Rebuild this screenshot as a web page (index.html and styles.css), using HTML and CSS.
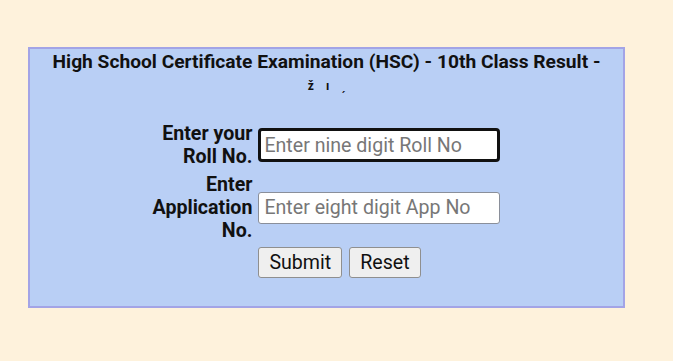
FILE: index.html
```html
<!DOCTYPE html>
<html>
<head>
<meta charset="utf-8">
<link rel="stylesheet" href="styles.css">
</head>
<body>
<div class="box">
  <div class="title">High School Certificate Examination (HSC) - 10th Class Result -</div>
  <div class="subtitle"><span class="g1">ž</span><span class="g2">ı</span><span class="g3">ˏ</span></div>
  <form class="form">
    <label class="label" for="roll">Enter your<br>Roll No.</label>
    <div class="cell"><input id="roll" class="field focused" type="text" placeholder="Enter nine digit Roll No"></div>
    <label class="label" for="app">Enter<br>Application<br>No.</label>
    <div class="cell"><input id="app" class="field" type="text" placeholder="Enter eight digit App No"></div>
    <div></div>
    <div class="buttons">
      <button type="button" class="btn">Submit</button>
      <button type="button" class="btn">Reset</button>
    </div>
  </form>
</div>
</body>
</html>
```
FILE: styles.css
```css
html, body {
  margin: 0;
  padding: 0;
  background: #fef2dc;
  font-family: Roboto, "Liberation Sans", sans-serif;
}
body {
  padding: 47px 48px 0 28px;
}
.box {
  width: 593px;
  height: 257px;
  background: #b9cff5;
  border: 2px solid #a3a4e6;
  box-sizing: content-box;
}
.title {
  text-align: center;
  font-weight: bold;
  font-size: 19.2px;
  color: #111;
  margin-top: 1px;
  line-height: 24px;
}
.subtitle {
  text-align: center;
  font-size: 12px;
  font-weight: bold;
  line-height: 24px;
  height: 24px;
  color: #111;
}
.g1, .g2, .g3 { display: inline-block; margin: 0 6px; }
.form {
  display: grid;
  grid-template-columns: auto auto;
  justify-content: center;
  align-items: center;
  column-gap: 6px;
  row-gap: 5px;
  margin-top: 24px;
}
.label {
  text-align: right;
  font-weight: bold;
  font-size: 19.6px;
  line-height: 23px;
  color: #111;
}
.field {
  width: 242px;
  height: 32px;
  box-sizing: border-box;
  font-family: Roboto, "Liberation Sans", sans-serif;
  font-size: 19.6px;
  padding: 0 5px;
  border: 1px solid #8a8f9a;
  border-radius: 3px;
  background: #fff;
  color: #222;
}
.field::placeholder { color: #777; }
.field.focused {
  border: 3px solid #111;
  border-radius: 4px;
  padding: 0 3px;
  height: 34px;
  outline: none;
}
.buttons {
  display: flex;
  gap: 7px;
}
.btn {
  font-family: Roboto, "Liberation Sans", sans-serif;
  font-size: 19.6px;
  height: 31px;
  padding: 0 10px;
  background: #efefef;
  border: 1px solid #8f8f8f;
  border-radius: 3px;
  color: #111;
}
```
